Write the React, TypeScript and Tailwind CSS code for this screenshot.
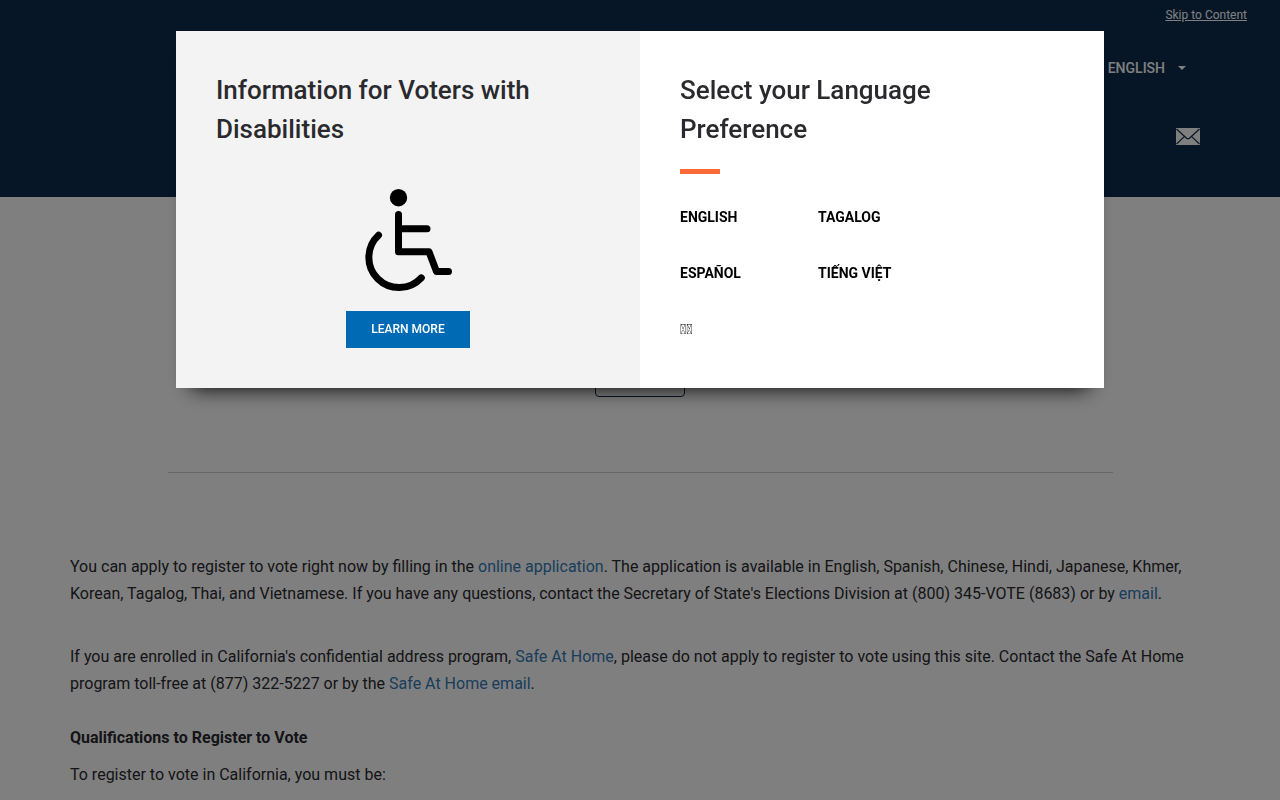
import { useState } from "react";

type Language = {
  code: string;
  label: string;
  name?: string;
};

const languages: Language[] = [
  { code: "en", label: "ENGLISH" },
  { code: "tl", label: "TAGALOG" },
  { code: "es", label: "ESPAÑOL" },
  { code: "vi", label: "TIẾNG VIỆT" },
  { code: "zh", label: "\uE83A\uE83B", name: "Chinese" },
];

function WheelchairIcon() {
  return (
    <svg
      viewBox="0 0 90 106"
      className="h-[106px] w-[90px]"
      fill="none"
      stroke="#000"
      strokeWidth="7"
      strokeLinecap="round"
      strokeLinejoin="round"
      aria-hidden="true"
    >
      <circle cx="35.5" cy="10.7" r="8.7" fill="#000" stroke="none" />
      <path d="M35.5 27.5V64.8H66L73.5 84.5H85.5" />
      <path d="M35.5 41.7H64" />
      <path d="M15.5 48.2A30.25 30.25 0 1 0 58.3 90.9" />
    </svg>
  );
}

function MailIcon() {
  return (
    <svg viewBox="0 0 24 17" className="h-[17px] w-6" aria-hidden="true">
      <path d="M0 0H24V17H0Z" fill="#fff" />
      <path
        d="M0.5 1L10.6 10.3Q12 11.5 13.4 10.3L23.5 1M0.5 16L8.3 8.6M23.5 16L15.7 8.6"
        fill="none"
        stroke="#0e2d4d"
        strokeWidth="1.2"
      />
    </svg>
  );
}

function SiteHeader() {
  return (
    <header className="flex h-[197px] flex-col items-end bg-[#0c2c4e] text-white">
      <a href="#content" className="mt-1.5 mr-[33px] text-xs leading-[18px] underline">
        Skip to Content
      </a>
      <button
        type="button"
        className="mt-[34px] mr-[94px] flex items-center gap-[13px] text-sm font-medium leading-5"
      >
        ENGLISH
        <span className="border-x-4 border-t-4 border-x-transparent border-t-white" />
      </button>
      <a href="#contact" aria-label="Email us" className="mt-[50px] mr-20">
        <MailIcon />
      </a>
    </header>
  );
}

function LanguageModal({ onClose }: { onClose: () => void }) {
  return (
    <div className="fixed inset-0 flex items-start justify-center bg-black/50 pt-[31px]">
      <div
        role="dialog"
        aria-modal="true"
        aria-label="Language preference"
        className="grid w-full max-w-[928px] grid-cols-2 bg-white shadow-[0_15px_20px_-15px_#000]"
      >
        <section className="flex flex-col items-center bg-[#f3f3f3] p-10">
          <h2 className="w-full text-[26px] font-medium leading-[39px] text-[#2a2a2e]">
            Information for Voters with Disabilities
          </h2>
          <div className="mt-[38px]">
            <WheelchairIcon />
          </div>
          <a
            href="#accessibility"
            className="mt-[18px] bg-[#006ab4] px-[25px] text-xs font-medium leading-[37px] text-white"
          >
            LEARN MORE
          </a>
        </section>
        <section className="p-10">
          <h2 className="text-[26px] font-medium leading-[39px] text-[#2a2a2e]">
            Select your Language Preference
          </h2>
          <div className="mt-5 h-[5px] w-10 bg-[#ff6a36]" />
          <ul className="mt-[33px] grid grid-cols-[138px_138px] gap-y-9">
            {languages.map((language) => (
              <li key={language.code} className="flex">
                <button
                  type="button"
                  aria-label={language.name}
                  onClick={onClose}
                  className="text-sm font-bold leading-5 text-black"
                >
                  {language.label}
                </button>
              </li>
            ))}
          </ul>
        </section>
      </div>
    </div>
  );
}

const linkClass = "text-[#337ab7]";

export default function App() {
  const [modalOpen, setModalOpen] = useState(true);

  return (
    <div className="h-screen overflow-hidden bg-white font-['Roboto',sans-serif] text-base leading-[27px] text-[#2a2a2e]">
      <SiteHeader />
      <main id="content" className="mx-auto max-w-[1170px] px-[15px]">
        <div className="flex h-[200px] items-end justify-center">
          <button
            type="button"
            aria-label="Register"
            className="h-10 w-[90px] rounded border border-[#0c2c4e]"
          />
        </div>
        <hr className="mx-auto mt-[75px] w-10/12 max-w-[945px] border-[#ccc]" />
        <p className="mt-20">
          You can apply to register to vote right now by filling in the{" "}
          <a href="#apply" className={linkClass}>online application</a>. The application is
          available in English, Spanish, Chinese, Hindi, Japanese, Khmer, Korean, Tagalog, Thai,
          and Vietnamese. If you have any questions, contact the Secretary of State's Elections
          Division at (800) 345-VOTE (8683) or by{" "}
          <a href="#email" className={linkClass}>email</a>.
        </p>
        <p className="mt-9">
          If you are enrolled in California's confidential address program,{" "}
          <a href="#safe" className={linkClass}>Safe At Home</a>, please do not apply to register
          to vote using this site. Contact the Safe At Home program toll-free at (877) 322-5227 or
          by the <a href="#safe-email" className={linkClass}>Safe At Home email</a>.
        </p>
        <h3 className="mt-[27px] font-bold">Qualifications to Register to Vote</h3>
        <p className="mt-2.5">To register to vote in California, you must be:</p>
      </main>
      {modalOpen && <LanguageModal onClose={() => setModalOpen(false)} />}
    </div>
  );
}
